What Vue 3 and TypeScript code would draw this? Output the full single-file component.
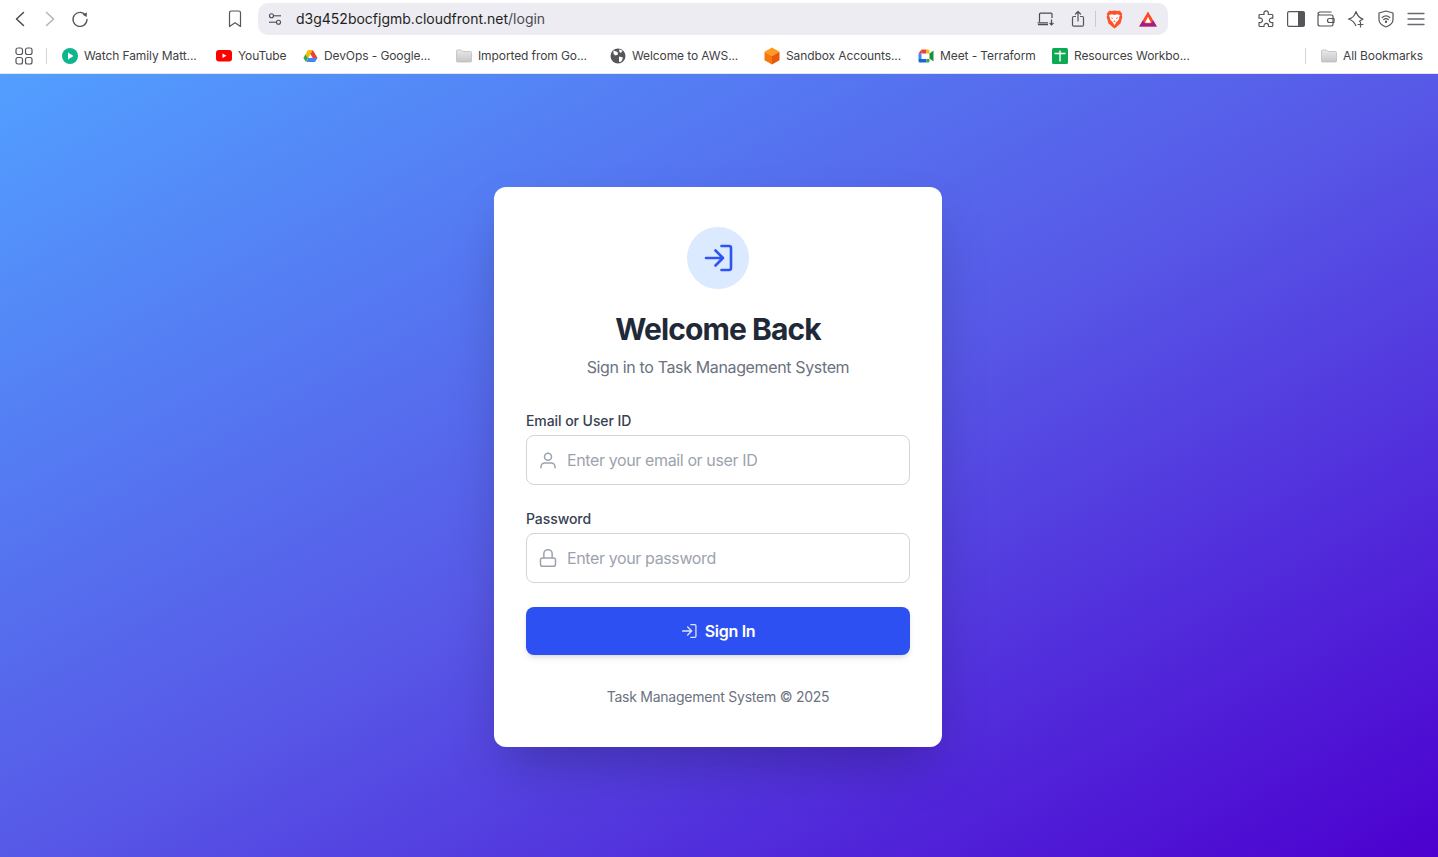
<template>
  <div class="page">
    <header class="browser">
      <div class="toolbar">
        <div class="nav">
          <svg class="ico" width="20" height="20" viewBox="0 0 20 20"><path d="M13.500 3.500 6.500 10l7 6.500" fill="none" stroke="#4a4a4f" stroke-width="1.500" stroke-linecap="round" stroke-linejoin="round" /></svg>
          <svg class="ico" width="20" height="20" viewBox="0 0 20 20"><path d="M6.500 3.500 13.500 10l-7 6.500" fill="none" stroke="#b4b4b8" stroke-width="1.500" stroke-linecap="round" stroke-linejoin="round" /></svg>
          <svg class="ico" width="20" height="20" viewBox="0 0 20 20"><path d="M15.800 6.500A7 7 0 1 0 17 10.500" fill="none" stroke="#55555a" stroke-width="1.300" stroke-linecap="round" /><path d="M12.500 5.500 17 3.500 16.500 8Z" fill="#55555a" /></svg>
        </div>
        <svg class="bookmark" width="16" height="18" viewBox="0 0 16 18"><path d="M2.500 2.800A1.800 1.800 0 0 1 4.300 1h7.400a1.800 1.800 0 0 1 1.800 1.800V16.500L8 12.800 2.500 16.500Z" fill="none" stroke="#55555a" stroke-width="1.200" stroke-linejoin="round" /></svg>
        <div class="urlbar">
          <svg width="14" height="14" viewBox="0 0 14 14" fill="none" stroke="#4a4a4f" stroke-width="1.100"><circle cx="3.500" cy="3.800" r="2" /><path d="M5.500 3.800H13" /><circle cx="10.500" cy="10.200" r="2" /><path d="M1 10.200H8.500" /></svg>
          <span class="url">d3g452bocfjgmb.cloudfront.net<span class="url-path">/login</span></span>
          <div class="url-actions">
            <svg width="18" height="14" viewBox="0 0 18 14" fill="none" stroke="#4a4a4f" stroke-width="1.200"><path d="M2.500 10V2.200A1 1 0 0 1 3.500 1.200H14A1 1 0 0 1 15 2.200V6" /><path d="M.6 10.800H11M.9 12.600H11" /><path d="M14.500 7.500V12.500M12.500 10.800 14.500 12.800 16.500 10.800" /></svg>
            <svg width="14" height="18" viewBox="0 0 14 18" fill="none" stroke="#55555a" stroke-width="1.200" stroke-linecap="round" stroke-linejoin="round"><path d="M4.500 6.500H2.700A1.200 1.200 0 0 0 1.500 7.700V15A1.200 1.200 0 0 0 2.700 16.200H11.300A1.200 1.200 0 0 0 12.500 15V7.700A1.200 1.200 0 0 0 11.300 6.500H9.500" /><path d="M7 11V1.500M4.500 4 7 1.500 9.500 4" /></svg>
            <span class="url-sep"></span>
            <svg width="17" height="19" viewBox="0 0 17 19"><path d="M8.500.6 11.500 1.100 13.800.8 16.300 3.700 15.700 5.400 16.300 7 14.500 13.400 9.900 17.500 8.500 18.400 7.100 17.500 2.500 13.400.7 7 1.300 5.400.7 3.700 3.200.8 5.500 1.100Z" fill="#fb542b" /><path d="M3.200 5 6 4.200 8.500 5 11 4.200 13.800 5 12.600 10 10.200 12.300 8.500 15.300 6.800 12.300 4.400 10Z" fill="#fff" /><path d="M5.300 7 7.300 8.300 5.800 9ZM11.700 7 9.700 8.300 11.200 9ZM7.300 11 8.500 10.300 9.700 11 8.500 12.500Z" fill="#fb6a3f" /></svg>
            <svg width="18" height="16" viewBox="0 0 18 16"><path d="M9 .5 17.800 15.500H.2Z" fill="#ff4724" /><path d="M.2 15.500 3.800 9.400 6 12.600H12L14.200 9.400 17.800 15.500Z" fill="#9e1f8c" /><path d="M9 5.800 12 11.800H6Z" fill="#fff" /></svg>
          </div>
        </div>
        <div class="extensions">
          <svg width="18" height="18" viewBox="0 0 18 18"><path d="M7 3.500A2.200 2.200 0 1 1 11.300 3.500V4.500H15A1 1 0 0 1 15.800 5.500V8.200H15A2.200 2.200 0 1 0 15 12.500H15.800V15.500A1 1 0 0 1 15 16.500H11.500V15.700A2.200 2.200 0 1 0 7 15.700V16.500H3A1 1 0 0 1 2 15.500V12.500H2.800A2.200 2.200 0 1 0 2.800 8.200H2V5.500A1 1 0 0 1 3 4.500H7Z" fill="none" stroke="#55555a" stroke-width="1.200" stroke-linejoin="round" /></svg>
          <svg width="18" height="16" viewBox="0 0 18 16"><rect x=".6" y=".6" width="16.800" height="14.800" rx="1.500" fill="none" stroke="#55555a" stroke-width="1.200" /><path d="M11 .6H16A1.400 1.400 0 0 1 17.400 2V14A1.400 1.400 0 0 1 16 15.400H11Z" fill="#55555a" /></svg>
          <svg width="18" height="16" viewBox="0 0 18 16" fill="none" stroke="#55555a" stroke-width="1.200" stroke-linejoin="round"><path d="M1 4V13A2 2 0 0 0 3 15H14.500A1.500 1.500 0 0 0 16 13.500V5.500A1.500 1.500 0 0 0 14.500 4H3A2 1.600 0 0 1 1 2.800 1.800 1.800 0 0 1 3 1H14.500" /><path d="M17 7.500H12.500A1.800 1.800 0 0 0 12.500 11.500H17Z" /></svg>
          <svg width="18" height="18" viewBox="0 0 18 18" fill="none" stroke="#55555a" stroke-width="1.200" stroke-linejoin="round"><path d="M12 11.500 16 9C12 8 10.500 6 9 1.500 7.500 6 6 8 1.500 9 6 10.500 7.500 12 9 16" /><path d="M13.500 12V17M11 14.500H16" stroke-linecap="round" /></svg>
          <svg width="16" height="18" viewBox="0 0 16 18" fill="none" stroke="#55555a" stroke-width="1.200" stroke-linecap="round"><path d="M8 1 15 3V9.500C15 13 12 15.500 8 17 4 15.500 1 13 1 9.500V3Z" stroke-linejoin="round" /><path d="M4.200 7.500C6.500 5.500 9.500 5.500 11.800 7.500M5.700 9.500C7 8.400 9 8.400 10.300 9.500" /><circle cx="8" cy="11.800" r=".6" fill="#55555a" /></svg>
          <svg width="18" height="14" viewBox="0 0 18 14" stroke="#6a6a6f" stroke-width="1.300" stroke-linecap="round"><path d="M1 1.500H17M1 7H17M1 12.500H17" /></svg>
        </div>
      </div>
      <div class="bookmarks">
        <svg class="grid-ico" width="18" height="18" viewBox="0 0 18 18" fill="none" stroke="#55555a" stroke-width="1.200"><rect x="1" y="1" width="6.500" height="6.500" rx="2" /><rect x="10.500" y="1" width="6.500" height="6.500" rx="2" /><rect x="1" y="10.500" width="6.500" height="6.500" rx="2" /><rect x="10.500" y="10.500" width="6.500" height="6.500" rx="2" /></svg>
        <span class="bm-sep"></span>
        <div class="bm-list">
          <a class="bm">
            <svg width="16" height="16" viewBox="0 0 16 16"><circle cx="8" cy="8" r="8" fill="#10b48e" /><path d="M6 4.500 11.500 8 6 11.500Z" fill="#fff" /></svg>
            Watch Family Matt...
          </a>
          <a class="bm">
            <svg width="16" height="12" viewBox="0 0 16 12"><rect width="16" height="11.500" rx="3" fill="#f00" /><path d="M6.500 3.500 10.500 5.800 6.500 8Z" fill="#fff" /></svg>
            YouTube
          </a>
          <a class="bm">
            <svg width="15" height="14" viewBox="0 0 16 14"><path d="M5.300.5H10.500L7.800 5.300 5.300 9.800 2.700 5Z" fill="#fbbc04" /><path d="M5.300 9.200 3.800 13.500H12.800L15.500 9.200Z" fill="#4285f4" /><path d="M2.700 5.200 5.300 9.500 3.200 13.500.4 9.200Z" fill="#34a853" /><path d="M10.500.5 15.500 9.200H10.400L7.800 4.900Z" fill="#ea4335" /></svg>
            DevOps - Google...
          </a>
          <a class="bm">
            <svg width="16" height="14" viewBox="0 0 16 14"><defs><linearGradient id="folder-fill" x1="0" y1="0" x2="0" y2="1"><stop offset="0" stop-color="#e9e9e9" /><stop offset="1" stop-color="#c6c6c6" /></linearGradient></defs><path d="M.5 2A1 1 0 0 1 1.500 1H5.500L7 2.500H14.500A1 1 0 0 1 15.500 3.500V12A1 1 0 0 1 14.500 13H1.500A1 1 0 0 1 .5 12Z" fill="url(#folder-fill)" stroke="#bdbdbd" stroke-width=".8" /></svg>
            Imported from Go...
          </a>
          <a class="bm">
            <svg width="16" height="16" viewBox="0 0 16 16"><circle cx="8" cy="8" r="7.500" fill="#55555a" /><path d="M3.500 2.500 7.500 4 8 6.500 5.500 7.500 3.500 6Z M9 8.500 13 9.500 11.500 13.500 9 14Z M9 1.500 12.500 2.500 11 5 9.500 4Z" fill="#fff" /></svg>
            Welcome to AWS...
          </a>
          <a class="bm">
            <svg width="16" height="18" viewBox="0 0 16 18"><path d="M8 .5 15.500 4.700 8 9 .5 4.700Z" fill="#ff9a1f" /><path d="M.5 4.700 8 9V17.500L.5 13.300Z" fill="#f5780c" /><path d="M15.500 4.700 8 9V17.500L15.500 13.300Z" fill="#e8590c" /></svg>
            Sandbox Accounts...
          </a>
          <a class="bm">
            <svg width="16" height="14" viewBox="0 0 16 14"><path d="M3.500.5H8.500V4.500H3.500Z" fill="#ea4335" /><path d="M8.500.5H10A1.500 1.500 0 0 1 11.500 2V4.500H8.500Z" fill="#fbbc04" /><path d="M.5 4.500H3.500V10H.5Z" fill="#4285f4" /><path d="M.5 10H8.500V13.500H2A1.500 1.500 0 0 1 .5 12Z" fill="#1967d2" /><path d="M8.500 10H11.500V12A1.500 1.500 0 0 1 10 13.500H8.500Z" fill="#34a853" /><path d="M11.500 4.500V9.500L15.500 12.500V1.500Z" fill="#1e8e3e" /><path d="M3.500 .5 .5 4.500H3.500Z" fill="#d33" /></svg>
            Meet - Terraform
          </a>
          <a class="bm">
            <svg width="16" height="16" viewBox="0 0 16 16"><rect width="16" height="16" rx="1.500" fill="#0da953" /><path d="M2.500 4.800H7.300V2.500H8.700V4.800H13.500V6.200H8.700V13.500H7.300V6.200H2.500Z" fill="#fff" /></svg>
            Resources Workbo...
          </a>
        </div>
        <span class="bm-sep all-sep"></span>
        <a class="bm all">
          <svg width="16" height="14" viewBox="0 0 16 14"><path d="M.5 2A1 1 0 0 1 1.500 1H5.500L7 2.500H14.500A1 1 0 0 1 15.500 3.500V12A1 1 0 0 1 14.500 13H1.500A1 1 0 0 1 .5 12Z" fill="url(#folder-fill)" stroke="#bdbdbd" stroke-width=".8" /></svg>
          All Bookmarks
        </a>
      </div>
    </header>

    <main class="stage">
      <section class="card">
        <div class="badge">
          <svg width="30" height="30" viewBox="0 0 30 30" fill="none" stroke="#2f54f3" stroke-width="2.600" stroke-linecap="round" stroke-linejoin="round"><path d="M18.500 3H26A2 2 0 0 1 28 5V25A2 2 0 0 1 26 27H18.500" /><path d="M3 15H20M12.500 7.500 20 15 12.500 22.500" /></svg>
        </div>
        <h1 class="title">Welcome Back</h1>
        <p class="subtitle">Sign in to Task Management System</p>

        <form class="form" @submit.prevent>
          <label class="field">
            <span class="label">Email or User ID</span>
            <span class="control">
              <svg class="field-ico" width="20" height="20" viewBox="0 0 24 24" fill="none" stroke="#9ca3af" stroke-width="1.800" stroke-linecap="round" stroke-linejoin="round"><circle cx="12" cy="8" r="4.200" /><path d="M3.600 21.200V20A4.500 4.500 0 0 1 8.100 15.600H15.900A4.500 4.500 0 0 1 20.400 20V21.200" /></svg>
              <input class="input" type="text" placeholder="Enter your email or user ID" />
            </span>
          </label>
          <label class="field">
            <span class="label">Password</span>
            <span class="control">
              <svg class="field-ico" width="20" height="20" viewBox="0 0 24 24" fill="none" stroke="#9ca3af" stroke-width="1.800" stroke-linecap="round" stroke-linejoin="round"><rect x="3" y="12" width="18" height="10" rx="2.500" /><path d="M7 12V7A5 5 0 0 1 17 7V12" /></svg>
              <input class="input" type="password" placeholder="Enter your password" />
            </span>
          </label>
          <button class="submit" type="submit">
            <svg width="16" height="16" viewBox="0 0 30 30" fill="none" stroke="#dfe5ff" stroke-width="2.400" stroke-linecap="round" stroke-linejoin="round"><path d="M18.500 3H26A2 2 0 0 1 28 5V25A2 2 0 0 1 26 27H18.500" /><path d="M3 15H20M12.500 7.500 20 15 12.500 22.500" /></svg>
            Sign In
          </button>
        </form>
        <p class="footer">Task Management System © 2025</p>
      </section>
    </main>
  </div>
</template>

<script setup lang="ts">
</script>

<style>
html,
body {
  margin: 0;
  padding: 0;
}
</style>

<style scoped>
.page {
  width: 1438px;
  height: 857px;
  display: flex;
  flex-direction: column;
  overflow: hidden;
  font-family: Inter, "Liberation Sans", sans-serif;
}

.browser {
  flex: none;
  height: 74px;
  box-sizing: border-box;
  border-bottom: 1px solid #e6e6e8;
  background: #fff;
}

.toolbar {
  height: 38px;
  display: flex;
  align-items: center;
  padding: 0 13px 0 10px;
  box-sizing: border-box;
}

.nav {
  width: 215px;
  display: flex;
  gap: 10px;
}

.bookmark {
  margin-left: 2px;
  margin-right: 15px;
}

.urlbar {
  width: 910px;
  height: 32px;
  box-sizing: border-box;
  padding: 0 11px 0 10px;
  display: flex;
  align-items: center;
  background: #edecf2;
  border-radius: 10px;
}

.url {
  margin-left: 14px;
  margin-top: -1px;
  font-size: 14px;
  color: #1f1f22;
}

.url-path {
  color: #4a4a4f;
}

.url-actions {
  margin-left: auto;
  display: flex;
  align-items: center;
  gap: 16px;
}

.url-sep {
  width: 1px;
  height: 16px;
  margin: 0 -6px;
  background: #c9c9ce;
}

.extensions {
  margin-left: auto;
  margin-right: -6px;
  display: grid;
  grid-template-columns: repeat(6, 30px);
  justify-items: center;
  align-items: center;
}

.bookmarks {
  height: 35px;
  display: flex;
  align-items: center;
  padding-left: 15px;
  box-sizing: border-box;
  font-size: 12px;
  letter-spacing: -0.1px;
  color: #3f3f44;
}

.grid-ico {
  margin-right: 13px;
}

.bm-sep {
  width: 1px;
  height: 16px;
  background: #d5d5d8;
}

.bm-list {
  margin-left: 15px;
  display: grid;
  grid-template-columns: 154px 87px 153px 154px 154px 154px 134px 150px;
}

.bm {
  display: flex;
  align-items: center;
  gap: 6px;
  white-space: nowrap;
}

.all-sep {
  margin-left: 103px;
}

.all {
  margin-left: 15px;
}

.stage {
  flex: 1;
  display: flex;
  align-items: center;
  justify-content: center;
  padding: 3px 2px 0 0;
  background: linear-gradient(to bottom right, #529fff 0%, #5759e7 50%, #4c00cf 100%);
}

.card {
  width: 448px;
  height: 560px;
  box-sizing: border-box;
  padding: 40px 32px;
  display: flex;
  flex-direction: column;
  align-items: center;
  background: #fff;
  border-radius: 12px;
  box-shadow: 0 25px 50px -12px rgba(0, 0, 0, 0.25);
}

.badge {
  flex: none;
  width: 62px;
  height: 62px;
  display: flex;
  align-items: center;
  justify-content: center;
  border-radius: 50%;
  background: #dbeafe;
}

.title {
  margin: 22px 0 0;
  font-size: 30px;
  line-height: 36px;
  font-weight: 700;
  letter-spacing: -0.9px;
  color: #1f2937;
}

.subtitle {
  margin: 8px 0 0;
  font-size: 16px;
  line-height: 24px;
  letter-spacing: -0.36px;
  color: #6b7280;
}

.form {
  width: 100%;
  margin-top: 32px;
  display: flex;
  flex-direction: column;
  gap: 24px;
}

.field {
  display: flex;
  flex-direction: column;
  gap: 4px;
}

.label {
  font-size: 14px;
  line-height: 20px;
  font-weight: 500;
  letter-spacing: -0.07px;
  color: #374151;
}

.control {
  height: 50px;
  box-sizing: border-box;
  padding: 0 11px;
  display: flex;
  align-items: center;
  gap: 9px;
  border: 1px solid #d1d5db;
  border-radius: 8px;
}

.field-ico {
  flex: none;
}

.input {
  flex: 1;
  min-width: 0;
  padding: 0;
  border: 0;
  outline: 0;
  background: transparent;
  font: inherit;
  font-size: 16px;
  letter-spacing: -0.38px;
  color: #1f2937;
}

.input::placeholder {
  color: #9ca3af;
  opacity: 1;
}

.submit {
  height: 48px;
  display: flex;
  align-items: center;
  justify-content: center;
  gap: 8px;
  border: 0;
  border-radius: 8px;
  background: #2d50f2;
  color: #fff;
  font: inherit;
  font-size: 16px;
  font-weight: 600;
  letter-spacing: -0.3px;
  box-shadow: 0 4px 6px -1px rgba(0, 0, 0, 0.1), 0 2px 4px -2px rgba(0, 0, 0, 0.1);
  cursor: pointer;
}

.footer {
  margin: 32px 0 0;
  font-size: 14px;
  line-height: 20px;
  letter-spacing: -0.24px;
  color: #6b7280;
}
</style>
